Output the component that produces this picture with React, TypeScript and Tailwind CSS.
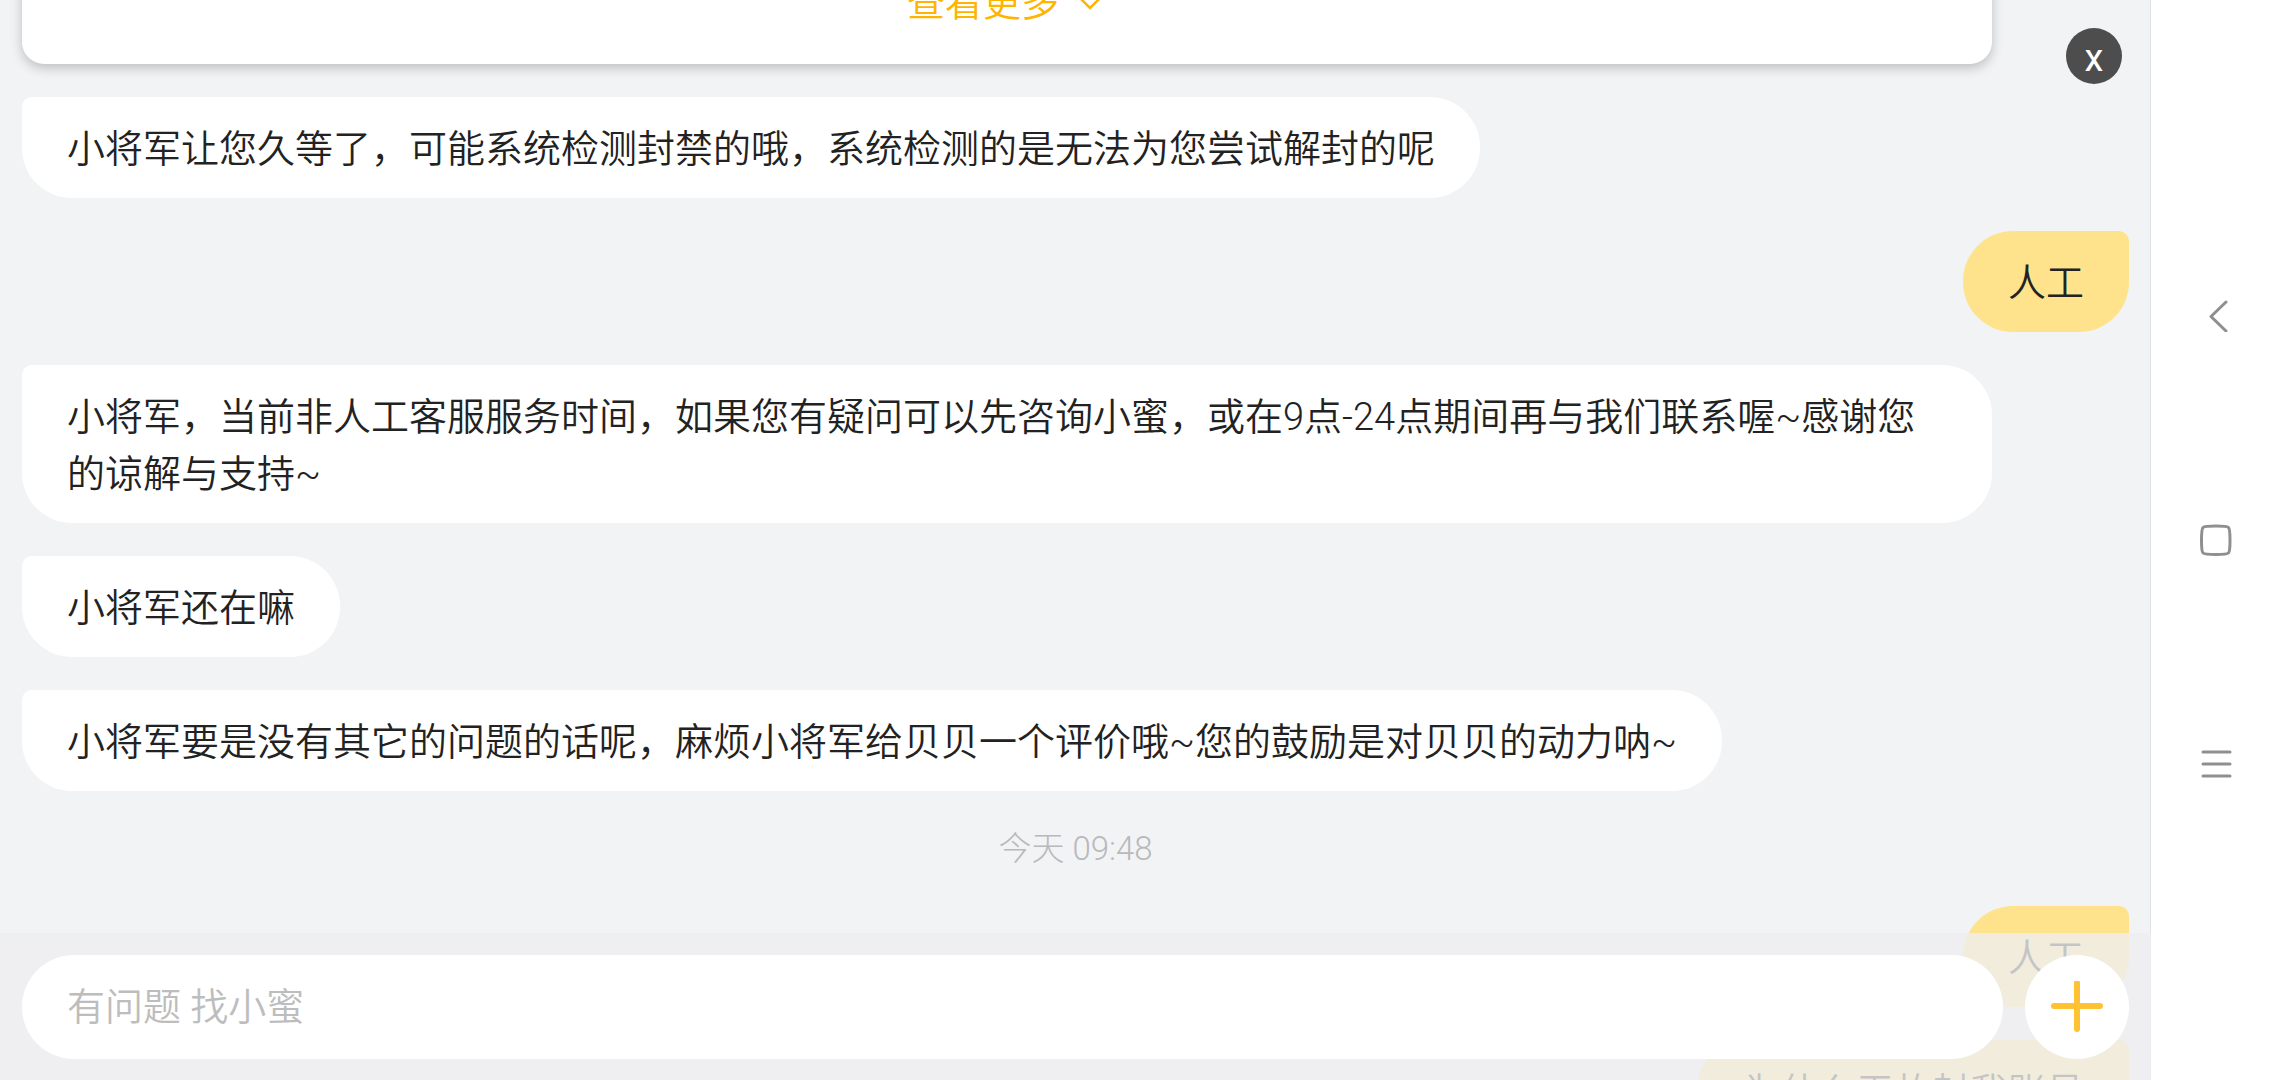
import { clsx } from "clsx";

type Message =
  | { kind: "bot"; text: string }
  | { kind: "user"; text: string }
  | { kind: "time"; text: string };

const messages: Message[] = [
  {
    kind: "bot",
    text: "小将军让您久等了，可能系统检测封禁的哦，系统检测的是无法为您尝试解封的呢",
  },
  { kind: "user", text: "人工" },
  {
    kind: "bot",
    text: "小将军，当前非人工客服服务时间，如果您有疑问可以先咨询小蜜，或在9点-24点期间再与我们联系喔~感谢您的谅解与支持~",
  },
  { kind: "bot", text: "小将军还在嘛" },
  {
    kind: "bot",
    text: "小将军要是没有其它的问题的话呢，麻烦小将军给贝贝一个评价哦~您的鼓励是对贝贝的动力呐~",
  },
  { kind: "time", text: "今天 09:48" },
  { kind: "user", text: "人工" },
  { kind: "user", text: "为什么无故封我账号" },
];

function MessageRow({ message }: { message: Message }) {
  if (message.kind === "time") {
    return (
      <time className="self-center text-[33px] leading-[49px] font-light text-[#b8b9bb]">
        {message.text}
      </time>
    );
  }
  return (
    <p
      className={clsx(
        "max-w-[calc(100%-137px)] px-[45px] pt-6 pb-5",
        message.kind === "bot"
          ? "self-start rounded-[50px] rounded-tl-[10px] bg-white"
          : "self-end rounded-[50px] rounded-tr-[10px] bg-[#ffe38c]"
      )}
    >
      {message.text}
    </p>
  );
}

function MoreCard() {
  return (
    <div className="-mt-[25px] mr-[137px] flex justify-center rounded-b-[22px] bg-white pr-1 pb-8 shadow-[0_4px_12px_rgba(0,0,0,0.22)]">
      <button
        type="button"
        className="flex items-center gap-[18px] text-[#ffb400]"
      >
        查看更多
        <svg width="26" height="16" viewBox="0 0 26 16" fill="none">
          <path d="M2 1l11 11L24 1" stroke="currentColor" strokeWidth="2.5" />
        </svg>
      </button>
    </div>
  );
}

function Composer() {
  return (
    <form className="absolute inset-x-0 bottom-0 flex gap-[22px] bg-[#edeef0]/80 px-[22px] pt-[22px] pb-[21px]">
      <input
        type="text"
        aria-label="有问题 找小蜜"
        placeholder="有问题 找小蜜"
        className="h-[104px] min-w-0 flex-1 rounded-full bg-white px-[45px] outline-none placeholder:text-[#bdbdbd]"
      />
      <button
        type="button"
        aria-label="更多"
        className="flex size-[104px] shrink-0 items-center justify-center rounded-full bg-white"
      >
        <svg width="52" height="52" viewBox="0 0 52 52" fill="none">
          <path
            d="M26 2v46M3 25h46"
            stroke="#ffc233"
            strokeWidth="6"
            strokeLinecap="round"
          />
        </svg>
      </button>
    </form>
  );
}

function SystemNav() {
  return (
    <nav className="flex w-[129px] shrink-0 flex-col items-center justify-center gap-48 bg-white text-[#8f8f8f]">
      <button type="button" aria-label="返回" className="size-8">
        <svg viewBox="0 0 32 32" fill="none">
          <path
            d="M26 2L11 16.500L26 31"
            stroke="currentColor"
            strokeWidth="3"
            strokeLinecap="round"
            strokeLinejoin="round"
          />
        </svg>
      </button>
      <button type="button" aria-label="主屏幕" className="size-8">
        <svg viewBox="0 0 32 32" fill="none">
          <path
            d="M16 2C9 2 4.500 2 3 3.500 1.500 5 1.500 9 1.500 16.500s0 11 1.500 12.500S9 30.500 16 30.500s11 0 12.500-1.500S30 24 30 16.500 30 5 28.500 3.500 23 2 16 2z"
            stroke="currentColor"
            strokeWidth="3"
          />
        </svg>
      </button>
      <button type="button" aria-label="最近任务" className="size-8">
        <svg viewBox="0 0 32 32" fill="none">
          <path
            d="M3 4h27M3 16h27M3 28h27"
            stroke="currentColor"
            strokeWidth="3"
            strokeLinecap="round"
          />
        </svg>
      </button>
    </nav>
  );
}

export default function App() {
  return (
    <div className="flex h-screen overflow-hidden bg-[#f2f3f5] font-[Roboto,'Noto_Sans_CJK_SC',sans-serif] text-[38px] leading-[57px] font-[350] text-[#222]">
      <main className="relative min-w-0 flex-1 overflow-hidden shadow-[inset_-1px_0_#e0e1e3]">
        <div className="flex flex-col gap-[33px] px-[22px]">
          <MoreCard />
          {messages.map((message, i) => (
            <MessageRow key={i} message={message} />
          ))}
        </div>
        <button
          type="button"
          aria-label="关闭"
          className="absolute top-7 right-[29px] flex size-14 items-center justify-center rounded-full bg-[#4d4d4d] pt-1 font-normal text-white"
        >
          x
        </button>
        <Composer />
      </main>
      <SystemNav />
    </div>
  );
}
